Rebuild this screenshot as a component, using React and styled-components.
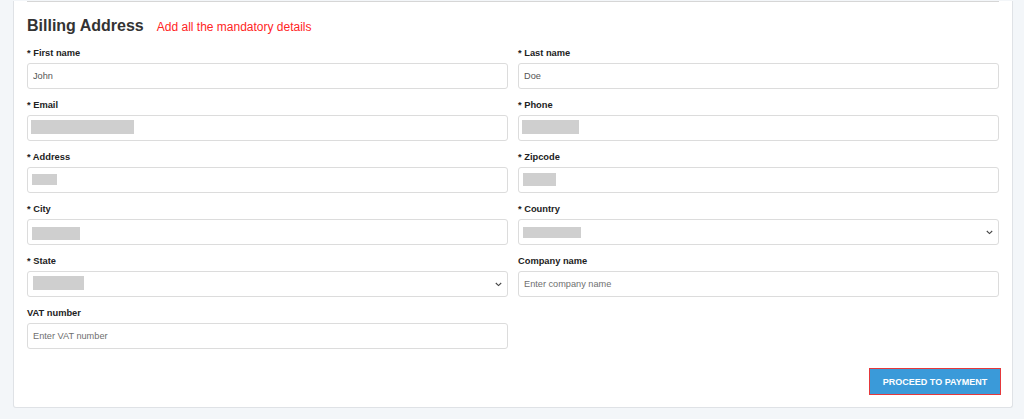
import styled, { createGlobalStyle } from 'styled-components'

const GlobalStyle = createGlobalStyle`
  body {
    margin: 0;
    background: #f3f6f9;
    font-family: "Liberation Sans", Arial, sans-serif;
  }
`

const fields = [
  {label: 'First name', required: true, value: 'John'},
  {label: 'Last name', required: true, value: 'Doe'},
  {label: 'Email', required: true, redact: {top: 5, left: 4, width: 103, height: 14}},
  {label: 'Phone', required: true, redact: {top: 5, left: 4, width: 57, height: 14}},
  {label: 'Address', required: true, redact: {top: 7, left: 5, width: 25, height: 11}},
  {label: 'Zipcode', required: true, redact: {top: 6, left: 5, width: 33, height: 13}},
  {label: 'City', required: true, redact: {top: 8, left: 5, width: 48, height: 13}},
  {label: 'Country', required: true, select: true, redact: {top: 8, left: 5, width: 58, height: 11}},
  {label: 'State', required: true, select: true, redact: {top: 5, left: 6, width: 51, height: 14}},
  {label: 'Company name', placeholder: 'Enter company name'},
  {label: 'VAT number', placeholder: 'Enter VAT number'},
]

const Chevron = () => (
  <ChevronIcon width="7" height="5" viewBox="0 0 7 5">
    <path d="M0.8 1 L3.5 3.6 L6.2 1" fill="none" stroke="#444" strokeWidth="1.1" />
  </ChevronIcon>
)

const Billing = () => (
  <Page>
    <GlobalStyle />
    <Card>
      <Divider />
      <TitleRow>
        <Title>Billing Address</Title>
        <Notice>Add all the mandatory details</Notice>
      </TitleRow>
      <FormGrid>
        {fields.map((f) => (
          <Field key={f.label}>
            <Label>{f.required ? '* ' : ''}{f.label}</Label>
            <Control>
              {f.select ? (
                <>
                  <Select defaultValue="">
                    <option value=""></option>
                  </Select>
                  <Chevron />
                </>
              ) : (
                <Input
                  defaultValue={f.value || ''}
                  placeholder={f.placeholder}
                />
              )}
              {f.redact && <Redact style={f.redact} />}
            </Control>
          </Field>
        ))}
      </FormGrid>
      <Footer>
        <ProceedButton>PROCEED TO PAYMENT</ProceedButton>
      </Footer>
    </Card>
  </Page>
)

export default Billing

const Page = styled.div`
  padding: 0 0 0 13px;
`

const Card = styled.div`
  width: 1000px;
  box-sizing: border-box;
  background: #fff;
  border: 1px solid #dfe2e6;
  border-top: none;
  border-radius: 0 0 3px 3px;
  padding: 0 13px 12px;
`

const Divider = styled.div`
  height: 1px;
  margin-top: 1px;
  background: #d6d6d6;
`

const TitleRow = styled.div`
  display: flex;
  align-items: baseline;
  gap: 13px;
  margin-top: 14px;
  line-height: 20px;
`

const Title = styled.h2`
  margin: 0;
  font-size: 16px;
  font-weight: bold;
  color: #333;
`

const Notice = styled.span`
  font-size: 12px;
  color: #ff2424;
`

const FormGrid = styled.div`
  display: grid;
  grid-template-columns: 1fr 1fr;
  column-gap: 10px;
  row-gap: 8px;
  margin-top: 8px;
`

const Field = styled.div`
  display: flex;
  flex-direction: column;
  gap: 2px;
`

const Label = styled.label`
  font-size: 9.3px;
  font-weight: bold;
  line-height: 16px;
  color: #222;
`

const Control = styled.div`
  position: relative;
`

const Input = styled.input`
  display: block;
  width: 100%;
  height: 26px;
  box-sizing: border-box;
  border: 1px solid #dcdcdc;
  border-radius: 3px;
  padding: 0 5px;
  font-family: "Liberation Sans", Arial, sans-serif;
  font-size: 9.2px;
  color: #555;
  background: #fff;

  &::placeholder {
    color: #6f6f6f;
  }
`

const Select = styled.select`
  display: block;
  width: 100%;
  height: 26px;
  box-sizing: border-box;
  appearance: none;
  border: 1px solid #dcdcdc;
  border-radius: 3px;
  padding: 0 5px;
  font-family: "Liberation Sans", Arial, sans-serif;
  font-size: 9.2px;
  color: #555;
  background: #fff;
`

const ChevronIcon = styled.svg`
  position: absolute;
  right: 6px;
  top: 11px;
  pointer-events: none;
`

const Redact = styled.span`
  position: absolute;
  background: #cfcfcf;
  pointer-events: none;
`

const Footer = styled.div`
  display: flex;
  justify-content: flex-end;
  margin-top: 19px;
  margin-right: -2px;
`

const ProceedButton = styled.button`
  width: 132px;
  height: 27px;
  box-sizing: border-box;
  border: none;
  box-shadow: inset 0 0 0 1px #e5383b;
  background: #3a9ad9;
  color: #fff;
  font-family: "Liberation Sans", Arial, sans-serif;
  font-size: 9px;
  font-weight: bold;
  padding: 0;
`
